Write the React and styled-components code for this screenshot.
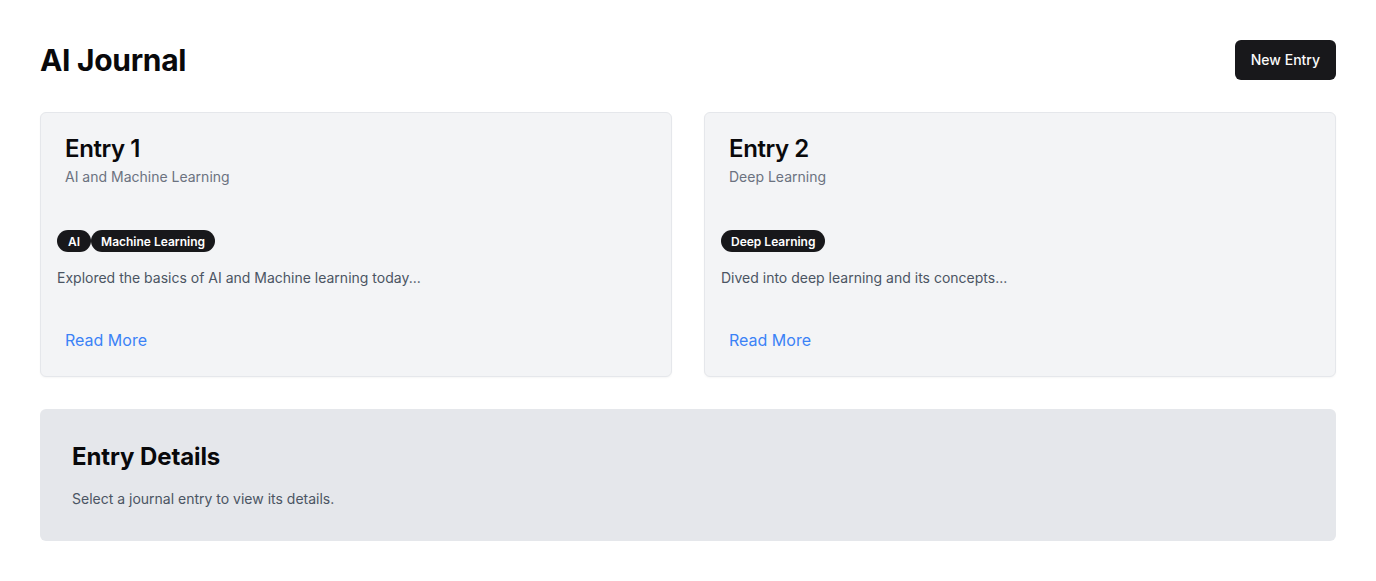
import React from "react";
import styled, { createGlobalStyle } from "styled-components";

const entries = [
  {
    id: 1,
    title: "Entry 1",
    subtitle: "AI and Machine Learning",
    tags: ["AI", "Machine Learning"],
    excerpt: "Explored the basics of AI and Machine learning today...",
  },
  {
    id: 2,
    title: "Entry 2",
    subtitle: "Deep Learning",
    tags: ["Deep Learning"],
    excerpt: "Dived into deep learning and its concepts...",
  },
];

const App = () => {
  return (
    <Page>
      <GlobalStyle />
      <Header>
        <Title>AI Journal</Title>
        <PrimaryButton>New Entry</PrimaryButton>
      </Header>

      <EntryGrid>
        {entries.map((entry) => (
          <Card key={entry.id}>
            <CardHeader>
              <CardTitle>{entry.title}</CardTitle>
              <CardSubtitle>{entry.subtitle}</CardSubtitle>
            </CardHeader>
            <CardContent>
              <Tags>
                {entry.tags.map((tag) => (
                  <Badge key={tag}>{tag}</Badge>
                ))}
              </Tags>
              <Excerpt>{entry.excerpt}</Excerpt>
            </CardContent>
            <CardFooter>
              <LinkButton>Read More</LinkButton>
            </CardFooter>
          </Card>
        ))}
      </EntryGrid>

      <Details>
        <DetailsTitle>Entry Details</DetailsTitle>
        <DetailsText>Select a journal entry to view its details.</DetailsText>
      </Details>
    </Page>
  );
};

const GlobalStyle = createGlobalStyle`
  * {
    box-sizing: border-box;
  }
  body {
    margin: 0;
    background: #fff;
    font-family: Inter, "Noto Sans", sans-serif;
    color: #09090b;
  }
`;

const Page = styled.div`
  padding: 40px;
`;

const Header = styled.div`
  display: flex;
  justify-content: space-between;
  align-items: center;
  height: 40px;
`;

const Title = styled.h1`
  margin: 0;
  font-size: 30px;
  line-height: 36px;
  font-weight: 700;
  letter-spacing: -0.3px;
`;

const PrimaryButton = styled.button`
  height: 40px;
  padding: 0 16px 2px;
  border: none;
  border-radius: 6px;
  background: #18181b;
  color: #fafafa;
  font-family: inherit;
  font-size: 14px;
  font-weight: 500;
`;

const EntryGrid = styled.div`
  display: grid;
  grid-template-columns: repeat(2, 1fr);
  gap: 32px;
  margin-top: 32px;
`;

const Card = styled.div`
  display: flex;
  flex-direction: column;
  background: #f3f4f6;
  border: 1px solid #e5e7eb;
  border-radius: 6px;
  box-shadow: 0 1px 2px rgba(0, 0, 0, 0.04);
`;

const CardHeader = styled.div`
  display: flex;
  flex-direction: column;
  gap: 6px;
  padding: 24px;
`;

const CardTitle = styled.h3`
  margin: 0;
  font-size: 24px;
  line-height: 24px;
  font-weight: 600;
  letter-spacing: -0.4px;
`;

const CardSubtitle = styled.p`
  margin: 0;
  font-size: 14px;
  line-height: 20px;
  color: #6b7280;
`;

const CardContent = styled.div`
  padding: 19px 16px 0;
`;

const Tags = styled.div`
  display: flex;
`;

const Badge = styled.span`
  display: inline-flex;
  align-items: center;
  height: 22px;
  padding: 0 10px;
  border-radius: 999px;
  background: #18181b;
  color: #fff;
  font-size: 12px;
  font-weight: 600;

  &:first-child:not(:last-child) {
    padding: 0 11px;
  }
`;

const Excerpt = styled.p`
  margin: 16px 0 0;
  font-size: 14px;
  line-height: 20px;
  color: #4b5563;
`;

const CardFooter = styled.div`
  display: flex;
  padding: 32px 16px 16px;
`;

const LinkButton = styled.button`
  height: 40px;
  padding: 0 8px;
  border: none;
  background: none;
  color: #3b82f6;
  font-family: inherit;
  font-size: 16px;
  line-height: 24px;
`;

const Details = styled.section`
  margin-top: 32px;
  padding: 32px;
  background: #e5e7eb;
  border-radius: 6px;
`;

const DetailsTitle = styled.h2`
  margin: 0 0 16px;
  font-size: 24px;
  line-height: 32px;
  font-weight: 700;
  letter-spacing: -0.1px;
`;

const DetailsText = styled.p`
  margin: 0;
  font-size: 14px;
  line-height: 20px;
  color: #4b5563;
`;

export default App;
